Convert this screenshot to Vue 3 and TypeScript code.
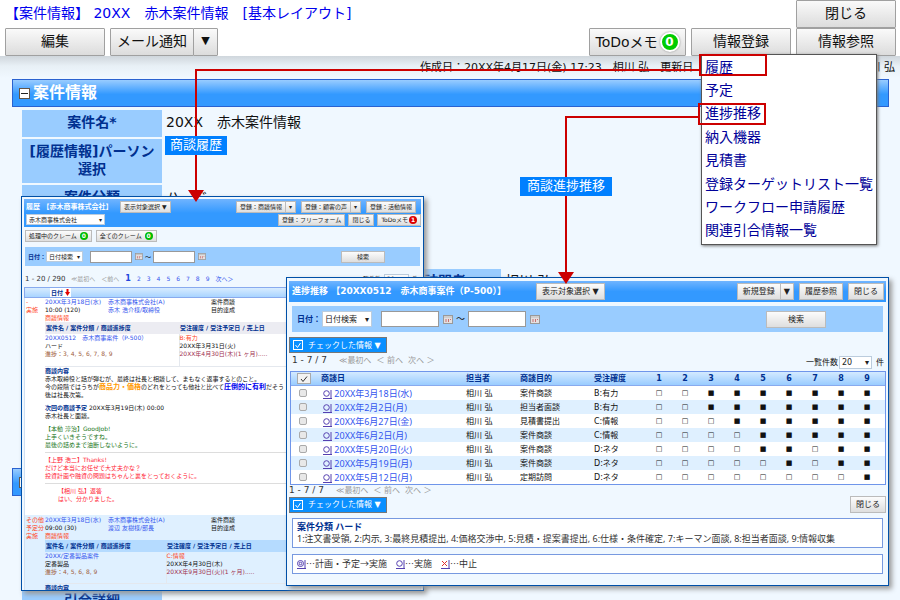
<script setup lang="ts">
import { ref } from 'vue'

interface MenuItem { label: string }
interface Progress {
  date: string
  purpose: string
  rank: string
  steps: string
}

const menu: MenuItem[] = [
  { label: '履歴' },
  { label: '予定' },
  { label: '進捗推移' },
  { label: '納入機器' },
  { label: '見積書' },
  { label: '登録ターゲットリスト一覧' },
  { label: 'ワークフロー申請履歴' },
  { label: '関連引合情報一覧' },
]

// steps: one digit per stage, 1 = reached
const rows: Progress[] = [
  { date: '20XX年3月18日(水)', purpose: '案件商談', rank: 'B:有力', steps: '001111111' },
  { date: '20XX年2月2日(月)', purpose: '担当者面談', rank: 'B:有力', steps: '001111111' },
  { date: '20XX年6月27日(金)', purpose: '見積書提出', rank: 'C:情報', steps: '000111111' },
  { date: '20XX年6月2日(月)', purpose: '案件商談', rank: 'C:情報', steps: '000011111' },
  { date: '20XX年5月20日(火)', purpose: '案件商談', rank: 'D:ネタ', steps: '000011011' },
  { date: '20XX年5月19日(月)', purpose: '案件商談', rank: 'D:ネタ', steps: '000001011' },
  { date: '20XX年5月12日(月)', purpose: '定期訪問', rank: 'D:ネタ', steps: '000000001' },
]

const historyFrom = ref('')
const historyTo = ref('')
const progressFrom = ref('')
const progressTo = ref('')
const checked = ref<boolean[]>(rows.map(() => false))
</script>

<template>
  <div class="page">
    <header class="top">
      <div class="top-row">
        <h1>【案件情報】 20XX　赤木案件情報　[基本レイアウト]</h1>
        <button type="button" class="btn">閉じる</button>
      </div>
      <div class="top-row">
        <button type="button" class="btn">編集</button>
        <div class="split">
          <button type="button" class="btn mail">メール通知</button>
          <button type="button" class="btn arrow" aria-label="メール通知">▼</button>
        </div>
        <span class="grow"></span>
        <button type="button" class="btn todo">ToDoメモ<span class="badge">0</span></button>
        <button type="button" class="btn">情報登録</button>
        <button type="button" class="btn">情報参照</button>
      </div>
    </header>

    <main class="body">
      <div class="stamp">
        <span>作成日：20XX年4月17日(金) 17:23　相川 弘　更新日</span>
        <span>相川 弘</span>
      </div>

      <h2 class="section">
        <svg class="minus" viewBox="0 0 11 11"><rect x="0.5" y="0.5" width="10" height="10" fill="#fff" stroke="#665544" /><path d="M2 5.5H9" stroke="#222" /></svg>
        案件情報
      </h2>
      <dl class="fields">
        <dt>案件名*</dt>
        <dd>20XX　赤木案件情報</dd>
        <dt>[履歴情報]パーソン<br />選択</dt>
        <dd></dd>
        <dt>案件分類</dt>
        <dd>ハード</dd>
      </dl>
      <dl class="fields second">
        <dt>案件訪問者</dt>
        <dd>相川 弘</dd>
      </dl>
      <h2 class="section lower">
        <svg class="minus" viewBox="0 0 11 11"><rect x="0.5" y="0.5" width="10" height="10" fill="#fff" stroke="#665544" /><path d="M2 5.5H9" stroke="#222" /></svg>
      </h2>
      <dl class="fields last">
        <dt>引合詳細</dt>
        <dd></dd>
      </dl>
    </main>

    <nav class="menu">
      <a v-for="m in menu" :key="m.label" href="#">{{ m.label }}</a>
    </nav>

    <!-- History window -->
    <section class="win history">
      <div class="bar">
        <div class="bar-row">
          <h3>履歴 【赤木商事株式会社】</h3>
          <button type="button" class="sb">表示対象選択 ▼</button>
          <span class="grow"></span>
          <div class="split"><button type="button" class="sb">登録：商談情報</button><button type="button" class="sb" aria-label="商談情報">▾</button></div>
          <div class="split"><button type="button" class="sb">登録：顧客の声</button><button type="button" class="sb" aria-label="顧客の声">▾</button></div>
          <button type="button" class="sb edge">登録：活動情報</button>
        </div>
        <div class="bar-row tight">
          <span class="sel company"><select aria-label="会社"><option>赤木商事株式会社</option></select></span>
          <span class="grow"></span>
          <button type="button" class="sb">登録：フリーフォーム</button>
          <button type="button" class="sb">閉じる</button>
          <button type="button" class="sb">ToDoメモ<span class="dot red">1</span></button>
        </div>
      </div>
      <div class="claims">
        <button type="button" class="sb">処理中のクレーム<span class="dot">0</span></button>
        <button type="button" class="sb">全てのクレーム<span class="dot">0</span></button>
      </div>
      <div class="search">
        <label for="h-kind">日付：</label>
        <span class="sel kind"><select id="h-kind"><option>日付検索</option></select></span>
        <input v-model="historyFrom" type="text" aria-label="開始日" />
        <svg class="cal" viewBox="0 0 10 9"><rect x="0.5" y="0.5" width="9" height="8" fill="#e4e0e0" stroke="#999" /><path d="M1 2H9" stroke="#bbb" /><path d="M3 4V7M5.500 4V7M7.500 4V5" stroke="#c87070" /></svg>
        <span class="tilde">～</span>
        <input v-model="historyTo" type="text" aria-label="終了日" />
        <svg class="cal" viewBox="0 0 10 9"><rect x="0.5" y="0.5" width="9" height="8" fill="#e4e0e0" stroke="#999" /><path d="M1 2H9" stroke="#bbb" /><path d="M3 4V7M5.500 4V7M7.500 4V5" stroke="#c87070" /></svg>
        <span class="grow"></span>
        <button type="button" class="sb find">検索</button>
      </div>
      <div class="pager">
        <span class="total">1 - 20 / 290</span>
        <span class="off">≪最初へ</span><span class="off">＜前へ</span>
        <b>1</b>
        <a v-for="n in 8" :key="n" href="#">{{ n + 1 }}</a>
        <a href="#">次へ＞</a>
        <span class="grow"></span>
        <label for="h-count">一覧件数</label>
        <span class="sel count"><select id="h-count"><option>20</option></select></span>
        <span>件</span>
      </div>
      <div class="list-head"><button type="button">日付<svg viewBox="0 0 5 7"><path d="M1.500 0H3.500V3H5L2.500 7L0 3H1.500Z" fill="#e00000" /></svg></button></div>

      <article class="entry">
        <div class="state">-<br />実施</div>
        <div class="detail">
          <div class="head">
            <a href="#">20XX年3月18日(水)</a><a href="#">赤木商事株式会社(A)</a><span>案件商談</span>
            <span>10:00 (120)</span><a href="#">赤木 浩介様/取締役</a><span>目的達成</span>
            <span class="warn">商談情報</span>
          </div>
          <table>
            <colgroup><col class="wide" /><col /></colgroup>
            <thead><tr><th>案件名 / 案件分類 / 商談進捗度</th><th>受注確度 / 受注予定日 / 売上日</th></tr></thead>
            <tbody>
              <tr>
                <td><a href="#">20XX0512　赤木商事案件（P-500）</a><br />ハード<br /><span class="brown">進捗：3, 4, 5, 6, 7, 8, 9</span></td>
                <td><span class="warn">B:有力</span><br />20XX年3月31日(火)<br /><span class="wine">20XX年4月30日(木)(1 ヶ月).....</span></td>
              </tr>
            </tbody>
          </table>
          <h4>商談内容</h4>
          <p>赤木取締役と話が弾むが、最終は社長と相談して、まもなく返事するとのこと。<br />今の段階ではうちが<b class="orange">商品力・価格</b>のどれをとっても他社と比べて<b class="blue">圧倒的に有利</b>だそう<br />後は社長次第。</p>
          <p class="next"><b>次回の商談予定</b> 20XX年3月19日(木) 00:00<br />赤木社長と面談。</p>
          <p class="green">【本動 淳治】GoodJob!<br />上手くいきそうですね。<br />最後の詰めまで油断しないように。</p>
          <p class="reply">【上野 浩二】Thanks!<br />だけど本当にお任せで大丈夫かな？<br />投資計画や融資の問題はちゃんと裏をとっておくように。</p>
          <p class="reply inner">【相川 弘】返答<br />はい、分かりました。</p>
        </div>
      </article>

      <article class="entry alt">
        <div class="state">その他<br />予定分<br />実施</div>
        <div class="detail">
          <div class="head">
            <a href="#">20XX年3月18日(水)</a><a href="#">赤木商事株式会社(A)</a><span>案件商談</span>
            <span>09:00 (30)</span><a href="#">渡辺 友樹様/部長</a><span>目的達成</span>
            <span class="warn">商談情報</span>
          </div>
          <table>
            <colgroup><col class="narrow" /><col /></colgroup>
            <thead><tr><th>案件名 / 案件分類 / 商談進捗度</th><th>受注確度 / 受注予定日 / 売上日</th></tr></thead>
            <tbody>
              <tr>
                <td><a href="#">20XX/定番製品案件</a><br />定番製品<br /><span class="brown">進捗：4, 5, 6, 8, 9</span></td>
                <td><span class="warn">C:情報</span><br />20XX年4月30日(木)<br /><span class="wine">20XX年9月30日(火)(1 ヶ月).....</span></td>
              </tr>
            </tbody>
          </table>
          <h4>商談内容</h4>
        </div>
      </article>
    </section>

    <!-- Progress window -->
    <section class="win progress">
      <div class="bar">
        <h3>進捗推移 【20XX0512　赤木商事案件（P-500）】</h3>
        <button type="button" class="sb">表示対象選択 ▼</button>
        <span class="grow"></span>
        <div class="split"><button type="button" class="sb">新規登録</button><button type="button" class="sb slim" aria-label="新規登録">▼</button></div>
        <button type="button" class="sb">履歴参照</button>
        <button type="button" class="sb">閉じる</button>
      </div>
      <div class="search">
        <label for="p-kind">日付：</label>
        <span class="sel kind"><select id="p-kind"><option>日付検索</option></select></span>
        <input v-model="progressFrom" type="text" aria-label="開始日" />
        <svg class="cal" viewBox="0 0 10 9"><rect x="0.5" y="0.5" width="9" height="8" fill="#e4e0e0" stroke="#999" /><path d="M1 2H9" stroke="#bbb" /><path d="M3 4V7M5.500 4V7M7.500 4V5" stroke="#c87070" /></svg>
        <span class="tilde">～</span>
        <input v-model="progressTo" type="text" aria-label="終了日" />
        <svg class="cal" viewBox="0 0 10 9"><rect x="0.5" y="0.5" width="9" height="8" fill="#e4e0e0" stroke="#999" /><path d="M1 2H9" stroke="#bbb" /><path d="M3 4V7M5.500 4V7M7.500 4V5" stroke="#c87070" /></svg>
        <span class="grow"></span>
        <button type="button" class="sb find">検索</button>
      </div>
      <button type="button" class="bulk"><svg viewBox="0 0 10 10"><rect x="0.5" y="0.5" width="9" height="9" fill="none" stroke="#fff" /><path d="M2.500 5L4.500 7.500L7.500 3" fill="none" stroke="#fff" /></svg>チェックした情報 ▼</button>
      <div class="pager">
        <span class="total">1 - 7 / 7</span>
        <span class="off">≪最初へ</span><span class="off">＜ 前へ</span><span class="off">次へ ＞</span>
        <span class="grow"></span>
        <div class="amount">
          <label for="p-count">一覧件数</label>
          <span class="sel count"><select id="p-count"><option>20</option></select></span>
          <span>件</span>
        </div>
      </div>
      <table class="grid">
        <colgroup>
          <col class="c-check" /><col class="c-date" /><col class="c-person" /><col class="c-purpose" /><col class="c-rank" />
          <col v-for="n in 9" :key="n" class="c-step" /><col />
        </colgroup>
        <thead>
          <tr>
            <th><button type="button" class="all" aria-label="全て選択"><svg viewBox="0 0 10 8"><path d="M2 4L4 6.500L8 1.500" fill="none" stroke="#333" /></svg></button></th>
            <th>商談日</th><th>担当者</th><th>商談目的</th><th>受注確度</th>
            <th v-for="n in 9" :key="n" class="step">{{ n }}</th><th></th>
          </tr>
        </thead>
        <tbody>
          <tr v-for="(r, i) in rows" :key="r.date">
            <td class="tick"><input v-model="checked[i]" type="checkbox" :aria-label="r.date" /></td>
            <td class="date"><a href="#"><svg class="mark" viewBox="0 0 9 9"><circle cx="3.500" cy="3.500" r="2.800" fill="none" stroke="#5540b0" /><path d="M8 0V9M0 8.500H9" stroke="#5540b0" /></svg> {{ r.date }}</a></td>
            <td>相川 弘</td>
            <td>{{ r.purpose }}</td>
            <td>{{ r.rank }}</td>
            <td v-for="(s, k) in r.steps.split('')" :key="k" class="step">{{ s === '1' ? '■' : '□' }}</td>
            <td></td>
          </tr>
        </tbody>
      </table>
      <div class="pager foot">
        <span class="total">1 - 7 / 7</span>
        <span class="off">≪最初へ</span><span class="off">＜ 前へ</span><span class="off">次へ ＞</span>
      </div>
      <div class="actions">
        <button type="button" class="bulk"><svg viewBox="0 0 10 10"><rect x="0.5" y="0.5" width="9" height="9" fill="none" stroke="#fff" /><path d="M2.500 5L4.500 7.500L7.500 3" fill="none" stroke="#fff" /></svg>チェックした情報 ▼</button>
        <button type="button" class="sb">閉じる</button>
      </div>
      <div class="note">
        <strong>案件分類 ハード</strong>
        <div>1:注文書受領, 2:内示, 3:最終見積提出, 4:価格交渉中, 5:見積・提案書提出, 6:仕様・条件確定, 7:キーマン面談, 8:担当者面談, 9:情報収集</div>
      </div>
      <div class="note marks">
        <span><svg class="mark" viewBox="0 0 9 9"><circle cx="3.500" cy="3.500" r="3" fill="none" stroke="#5540b0" /><circle cx="3.500" cy="3.500" r="1.300" fill="none" stroke="#5540b0" /><path d="M8 0V9M0 8.500H9" stroke="#5540b0" /></svg>…計画・予定→実施</span>
        <span><svg class="mark" viewBox="0 0 9 9"><circle cx="3.500" cy="3.500" r="2.800" fill="none" stroke="#5540b0" /><path d="M8 0V9M0 8.500H9" stroke="#5540b0" /></svg>…実施</span>
        <span><svg class="mark" viewBox="0 0 9 9"><path d="M1 1L6 6M6 1L1 6" stroke="#e03030" /><path d="M8 0V9M0 8.500H9" stroke="#5540b0" /></svg>…中止</span>
      </div>
    </section>

    <svg class="links" viewBox="0 0 900 600" width="900" height="600">
      <g fill="none" stroke="#cc0000" stroke-width="2">
        <path d="M700 70H196V192" />
        <path d="M699 117H566V274" />
        <rect x="700" y="55" width="66" height="20" />
        <rect x="699" y="104" width="66" height="20" />
      </g>
      <path d="M188 190H204L196 202Z" fill="#cc0000" />
      <path d="M558 272H574L566 284Z" fill="#cc0000" />
    </svg>
    <span class="tag tag-history">商談履歴</span>
    <span class="tag tag-progress">商談進捗推移</span>
  </div>
</template>

<style>
body { margin: 0; }
</style>

<style scoped>
.page {
  position: relative;
  height: 100vh;
  overflow: hidden;
  background: #f0f8ff;
  font-family: "DejaVu Sans", "Noto Sans CJK JP", sans-serif;
  font-size: 14px;
  line-height: 18px;
  color: #111;
}
.page *, .page *::before, .page *::after { box-sizing: border-box; }
button, input, select { font: inherit; color: inherit; margin: 0; padding: 0; }
button { cursor: pointer; white-space: nowrap; }
a { text-decoration: none; color: #3355ee; }
h1, h2, h3, h4, p, dl, dd { margin: 0; }
.grow { flex: 1; }
.split { display: flex; }

.top { background: #fff; }
.top-row { display: flex; gap: 5px; padding: 0 4px 0 5px; height: 28px; }
.top h1 { flex: 1; font-size: 14px; font-weight: 400; line-height: 26px; color: #0000ee; white-space: pre; }
.btn {
  width: 100px;
  height: 28px;
  padding-bottom: 2px;
  border: 1px solid #a0a0a0;
  border-radius: 1px;
  background: linear-gradient(#fafafa, #dcdcdc);
}
.btn.mail { width: 84px; }
.btn.arrow { width: 25px; margin-left: -1px; font-size: 11px; }
.btn.todo { width: 97px; display: flex; align-items: center; justify-content: center; gap: 2px; padding-bottom: 0; }
.badge {
  width: 20px; height: 20px;
  border: 2px solid #fff; border-radius: 50%;
  background: #00cc00; color: #fff;
  box-shadow: 0 0 2px #888;
  font-size: 12px; font-weight: 700; line-height: 16px;
}

.body { background: linear-gradient(#cfd6dc, #e8f0f6 10px, #f0f8ff 22px); }
.stamp { display: flex; justify-content: space-between; height: 23px; padding: 0 5px 0 420px; font-size: 11px; line-height: 24px; white-space: nowrap; }
.section {
  display: flex; align-items: center; gap: 3px;
  height: 28px; margin: 0 11px 0 12px; padding: 0 6px;
  border: 1px solid #2a62d0;
  background: linear-gradient(#99ccff, #3399ff 55%);
  color: #fff; font-size: 16px; font-weight: 700;
}
.minus { width: 11px; height: 11px; }
.fields {
  display: grid; grid-template-columns: 140px 1fr;
  grid-auto-rows: minmax(27px, auto); gap: 2px 4px;
  margin: 3px 11px 0 22px;
}
.fields dt { background: #99ccff; color: #003090; font-weight: 700; text-align: center; padding: 3px 0 5px; }
.fields dd { padding: 3px 0 5px; }
.fields.second { margin-top: 57px; margin-left: 361px; }
.section.lower { margin-top: 172px; }
.fields.last { margin-top: 92px; }

.menu {
  position: absolute; left: 701px; top: 54px;
  display: grid; width: 176px; height: 191px; padding: 0 3px 2px;
  border: 1px solid #555; background: #fff;
  box-shadow: 1px 1px 3px #777;
}
.menu a { display: flex; align-items: center; color: #000099; white-space: nowrap; }

.links { position: absolute; left: 0; top: 0; pointer-events: none; }
.tag { position: absolute; height: 19px; background: #0080ff; color: #fff; font-size: 13px; line-height: 18px; text-align: center; }
.tag-history { left: 165px; top: 136px; width: 62px; }
.tag-progress { left: 520px; top: 177px; width: 92px; }

/* floating windows */
.win {
  position: absolute; overflow: hidden;
  border: 1px solid #0050a8; background: #f0f8ff;
  box-shadow: 3px 3px 5px #999;
}
.win .bar { background: linear-gradient(#70b4ff, #3399ff 50%); color: #fff; }
.win h3 { font-weight: 700; white-space: pre; }
.sb { border: 1px solid #bbb; background: linear-gradient(#fcfcfc, #dedede); color: #222; }
.split .sb + .sb { margin-left: -1px; }
.search { display: flex; align-items: center; background: #99ccff; }
.search label { color: #003090; font-weight: 700; }
.search input { border: 1px solid #999; background: #fff; }
.cal { flex: none; }
.tilde { text-align: center; }
.sel { display: inline-grid; align-items: center; border: 1px solid #bcd; background: #fff; color: #222; }
.sel select { grid-area: 1 / 1; width: 100%; border: 0; background: none; appearance: none; padding-left: 2px; outline: 0; }
.sel::after { content: "▾"; grid-area: 1 / 1; justify-self: end; padding-right: 2px; pointer-events: none; }
.pager { display: flex; align-items: center; white-space: nowrap; }
.off { color: #999; }

/* history */
.history { left: 21px; top: 196px; width: 403px; height: 395px; padding: 2px; font-size: 6px; line-height: 8px; }
.history .bar { padding: 1px 0 1px 2px; }
.bar-row { display: flex; align-items: center; gap: 5px; height: 13px; }
.bar-row.tight { gap: 3px; }
.history h3 { width: 89px; font-size: 7px; }
.history .sb { height: 12px; padding: 0 3px; line-height: 8px; }
.history .edge { margin-right: 5px; }
.company { width: 79px; height: 11px; }
.dot {
  display: inline-block; width: 8px; height: 8px; margin-left: 3px;
  border-radius: 50%; background: #00bb00; color: #fff; font-weight: 700; text-align: center; line-height: 8px;
}
.dot.red { background: #dd0000; margin-left: 1px; }
.claims { display: flex; gap: 4px; padding: 3px 1px 5px; }
.history .search { height: 19px; margin: 0 1px; padding: 0 35px 0 3px; }
.history .kind { width: 37px; height: 11px; margin-right: 7px; }
.history .search input { width: 42px; height: 12px; }
.history .cal { width: 8px; height: 7px; margin-left: 3px; }
.history .tilde { width: 10px; }
.history .find { width: 44px; }
.history .pager { height: 21px; gap: 6px; padding: 4px 3px 0 1px; }
.history .pager .total { width: 40px; font-size: 7px; }
.history .pager b { color: #2244dd; font-size: 8px; }
.history .count { width: 25px; height: 10px; margin: 0 -3px; }
.list-head { height: 11px; padding-left: 25px; border: 1px solid #88aaee; background: linear-gradient(#d8ecff, #a8d4ff); }
.list-head button { display: flex; align-items: center; gap: 2px; height: 9px; padding: 0 1px; border: 0; background: #fff; color: #003090; font-weight: 700; }
.list-head svg { width: 5px; height: 7px; }
.entry { display: grid; grid-template-columns: 19px 1fr; padding: 0 2px 12px 1px; border: solid #cfe0f4; border-width: 0 1px; background: #fff; }
.entry.alt { background: #dff0ff; padding-top: 1px; }
.state, .warn { color: #ff4422; }
.state { white-space: nowrap; }
.head { display: grid; grid-template-columns: 63px 103px 1fr; grid-auto-rows: 8px; white-space: nowrap; }
.entry table { width: 100%; table-layout: fixed; border-collapse: collapse; }
.wide { width: 134px; }
.narrow { width: 121px; }
.entry th { height: 12px; padding: 0 1px; background: #ececf2; color: #003090; text-align: left; white-space: nowrap; }
.entry.alt th { background: #b5dbff; }
.entry td { height: 32px; padding: 0; vertical-align: top; border: 1px solid #e4e8ee; border-width: 0 1px 1px 0; white-space: nowrap; }
.entry h4 { color: #003090; font-size: 6px; }
.entry p { white-space: nowrap; }
.brown { color: #a06040; }
.wine { color: #a03050; }
.orange { color: #ff9900; font-size: 7px; }
.blue { color: #0000ee; font-size: 7px; }
.entry .next { margin: 5px 0; }
.next b { color: #003090; }
.green { color: #227722; }
.entry .reply { margin-top: 3px; padding-top: 3px; border-top: 1px solid #ddd; color: #ff2233; }
.entry .inner { padding-left: 13px; }

/* progress */
.progress { left: 286px; top: 277px; width: 603px; height: 309px; padding: 3px 2px; font-size: 8px; line-height: 11px; }
.progress .bar { display: flex; align-items: center; gap: 5px; height: 21px; padding: 0 2px 0 3px; }
.progress h3 { width: 239px; font-size: 9px; }
.progress .sb { height: 17px; padding: 0 5px; }
.progress .slim { padding: 0 3px; }
.progress .search { height: 26px; margin: 4px 3px 5px; padding: 0 57px 0 5px; }
.progress .kind { width: 50px; height: 16px; margin: 0 9px 0 1px; }
.progress .search input { width: 58px; height: 16px; }
.progress .cal { width: 10px; height: 9px; margin-left: 4px; }
.progress .tilde { width: 15px; font-size: 9px; }
.progress .find { width: 60px; }
.bulk {
  display: flex; align-items: center; gap: 5px;
  width: 98px; height: 16px; padding: 0 3px; border: 1px solid #777;
  background: #0a90ff; color: #fff; line-height: 11px;
}
.bulk svg { width: 10px; height: 10px; }
.progress .pager { height: 18px; gap: 5px; padding: 0 2px 3px 3px; }
.total { font-size: 9px; color: #333; }
.progress .total { width: 42px; }
.amount { display: flex; align-items: center; gap: 1px; padding-top: 3px; }
.progress .count { width: 33px; height: 13px; margin-right: 3px; }
.grid { width: 596px; margin-left: 1px; table-layout: fixed; border-collapse: separate; border-spacing: 0; border: 1px solid #6f95ea; background: #fff; }
.c-check { width: 26px; }
.c-date { width: 145px; }
.c-person { width: 54px; }
.c-purpose { width: 74px; }
.c-rank { width: 56px; }
.c-step { width: 26px; }
.grid th { height: 14px; padding: 0 0 0 4px; background: linear-gradient(#d4eaff, #99ccff); border-bottom: 1px solid #88aaee; color: #003090; text-align: left; }
.grid td { height: 14px; padding: 0 0 0 4px; white-space: nowrap; }
.grid tbody tr:nth-child(even) { background: #dff0ff; }
.grid .step { padding: 0; text-align: center; }
.grid td.step { font-size: 7px; }
.grid td.date { font-family: "Noto Sans", "Noto Sans CJK JP", sans-serif; font-size: 9px; padding-left: 6px; }
.all { display: block; width: 14px; height: 11px; margin-left: 2px; border: 1px solid #aaa; background: #f2f2f2; }
.all svg { display: block; width: 10px; height: 8px; margin: auto; }
.tick input {
  display: block; appearance: none; width: 8px; height: 8px; margin-left: 4px;
  border: 1px solid #aaa; border-radius: 2px; background: #e8e8e8;
}
.tick input:checked { background: #3399ff; }
.mark { width: 9px; height: 9px; vertical-align: -2px; }
.progress .pager.foot { height: 11px; padding: 0; }
.actions { display: flex; align-items: center; justify-content: space-between; height: 17px; }
.note {
  margin: 5px 3px 0; padding: 2px 4px; border: 1px solid #7799e0; background: #fff;
  font-family: "Noto Sans", "Noto Sans CJK JP", sans-serif; font-size: 9px; line-height: 12px; color: #333; white-space: nowrap;
}
.note strong { color: #003090; }
.note.marks { display: flex; gap: 9px; margin-top: 6px; padding: 3px 4px; font-family: "Noto Sans CJK JP", sans-serif; }
</style>
